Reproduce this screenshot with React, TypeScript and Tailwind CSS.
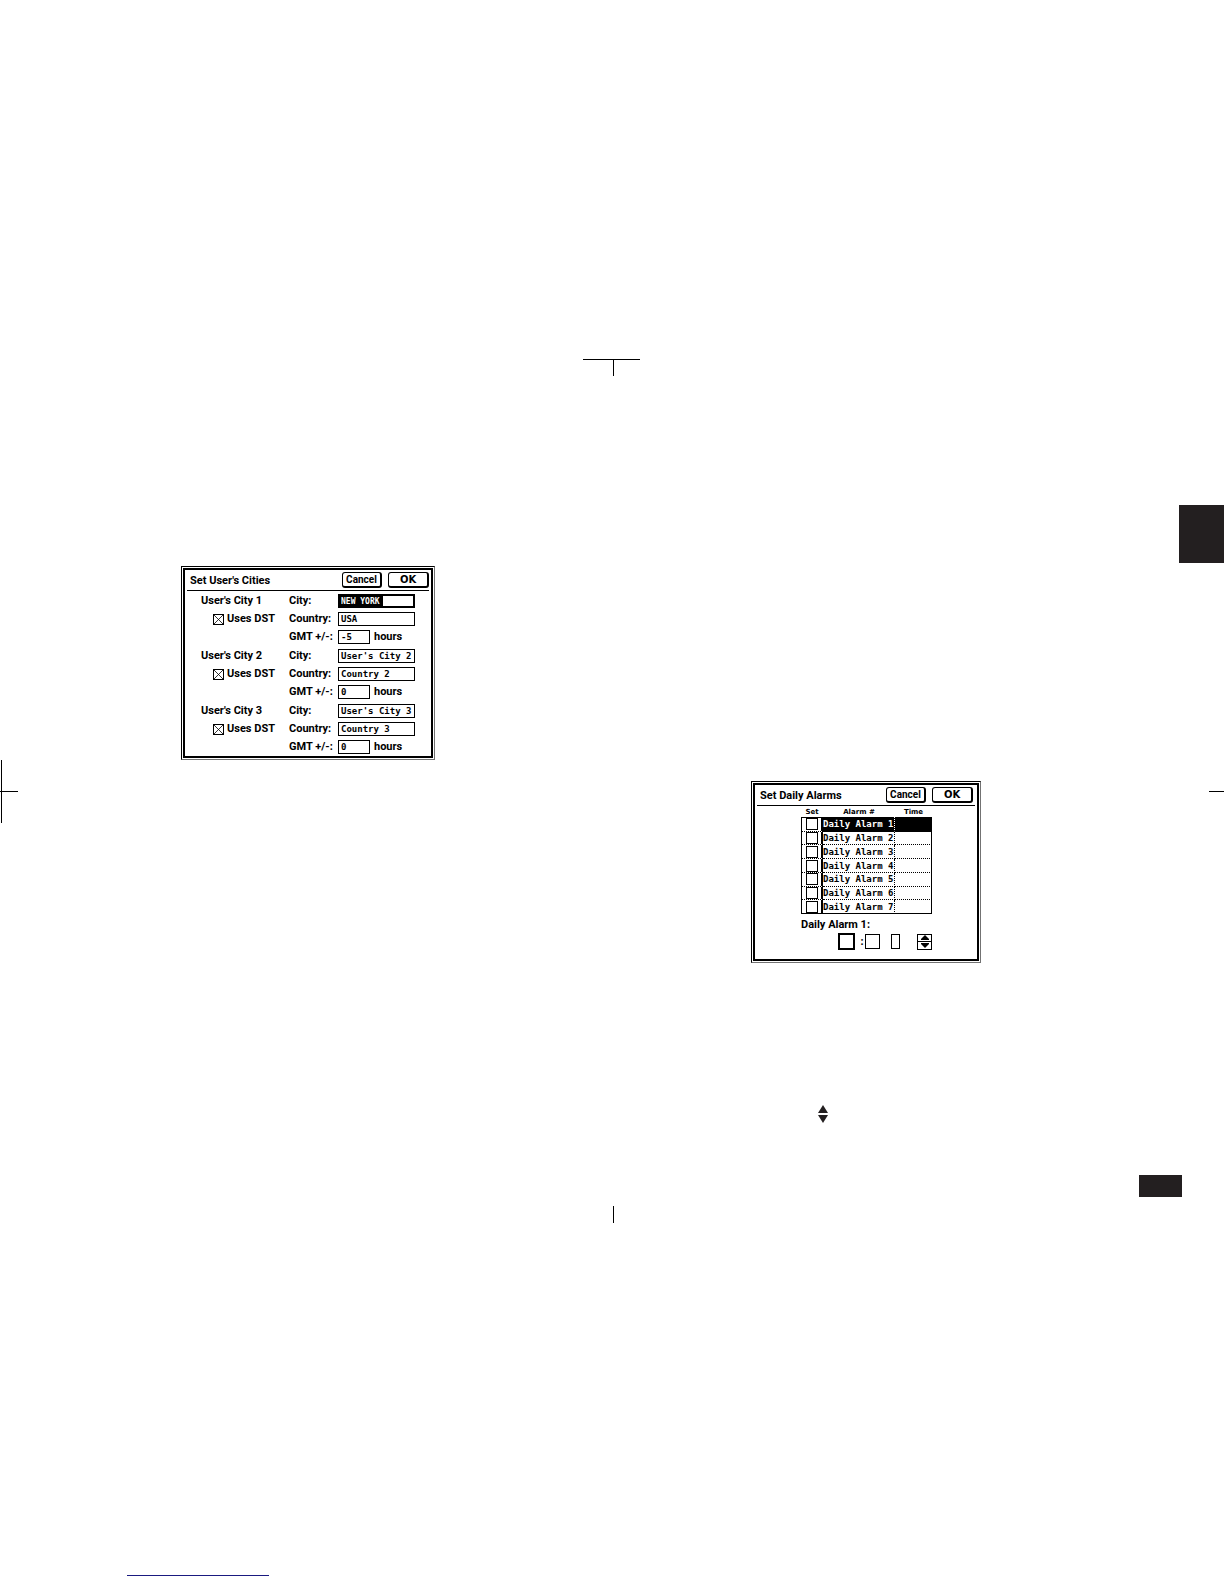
import React from "react";

const ui = "font-['Roboto',sans-serif] font-bold";
const mono = "font-['DejaVu_Sans_Mono',monospace] font-bold leading-3";

type DialogProps = { title: string; className: string; headerClassName?: string; children: React.ReactNode };

function Dialog({ title, className, headerClassName = "", children }: DialogProps) {
  return (
    <section
      aria-label={title}
      className={`border border-r-neutral-500 border-b-neutral-500 border-l-black border-t-black bg-white p-px ${className}`}
    >
      <div className="h-full border-2 border-black px-0.5">
        <header className={`flex items-start border-b border-black pl-[3px] pt-0.5 ${headerClassName}`}>
          <h2 className={`${ui} flex-1 text-[11px] leading-[18px]`}>{title}</h2>
          <button className="mr-1.5 h-4 w-10 rounded-[3px] border border-b-2 border-r-2 border-black text-center font-['Roboto',sans-serif] text-[10px] font-bold leading-3">
            Cancel
          </button>
          <button className="h-4 w-[41px] rounded-[3px] border border-b-2 border-r-2 border-black text-center font-['DejaVu_Sans',sans-serif] text-[10px] font-bold leading-3">
            OK
          </button>
        </header>
        {children}
      </div>
    </section>
  );
}

const cities = [
  { n: 1, city: "NEW YORK", country: "USA", gmt: "-5", active: true },
  { n: 2, city: "User's City 2", country: "Country 2", gmt: "0", active: false },
  { n: 3, city: "User's City 3", country: "Country 3", gmt: "0", active: false },
];

function CityGroup({ n, city, country, gmt, active }: (typeof cities)[number]) {
  return (
    <fieldset className={`${ui} mb-px grid grid-cols-[88px_49px_1fr] grid-rows-[18px_18px_18px] items-center pl-3.5 text-[11px] leading-4 last:mb-0`}>
      <span>User's City {n}</span>
      <label htmlFor={`city-${n}`}>City:</label>
      {active ? (
        <span className="flex h-3.5 w-[77px] border-2 border-l-0 border-black">
          <input id={`city-${n}`} defaultValue={city} className={`${mono} h-full w-[45px] bg-black pl-[3px] text-[8px] text-white outline-none`} />
        </span>
      ) : (
        <input id={`city-${n}`} defaultValue={city} className={`${mono} h-3.5 w-[77px] border border-black pl-0.5 text-[9px] outline-none`} />
      )}
      <label className="flex items-center gap-[3px] pl-3">
        <span className="relative flex size-[11px]">
          <input type="checkbox" defaultChecked className="peer size-[11px] appearance-none border border-black" />
          <svg viewBox="0 0 11 11" className="pointer-events-none absolute inset-0 hidden size-[11px] peer-checked:block" aria-hidden="true">
            <path d="M1 1L10 10M10 1L1 10" stroke="black" strokeWidth="0.8" />
          </svg>
        </span>
        Uses DST
      </label>
      <label htmlFor={`country-${n}`}>Country:</label>
      <input id={`country-${n}`} defaultValue={country} className={`${mono} h-3.5 w-[77px] border border-black pl-0.5 text-[9px] outline-none`} />
      <label htmlFor={`gmt-${n}`} className="col-start-2 whitespace-nowrap">GMT +/-:</label>
      <span className="flex items-center gap-1">
        <input id={`gmt-${n}`} defaultValue={gmt} className={`${mono} h-3.5 w-8 border border-black pl-0.5 text-[9px] outline-none`} />
        hours
      </span>
    </fieldset>
  );
}

function AlarmTable() {
  return (
    <table className="ml-[44px] mt-px h-[107px] w-[131px] table-fixed border-separate border-spacing-0">
      <colgroup>
        <col className="w-[22px]" />
        <col className="w-[72px]" />
        <col className="w-[37px]" />
      </colgroup>
      <thead>
        <tr className="font-['DejaVu_Sans',sans-serif] text-[7px] font-bold leading-[10px]">
          <th className="p-0">Set</th>
          <th className="p-0">Alarm #</th>
          <th className="p-0">Time</th>
        </tr>
      </thead>
      <tbody>
        {[1, 2, 3, 4, 5, 6, 7].map((n) => (
          <tr key={n} className={n === 1 ? "bg-black text-white" : ""}>
            <td className={`border-b border-l border-r-2 border-black bg-white p-0 ${n === 1 ? "border-t" : ""} ${n === 7 ? "" : "[border-bottom-style:dotted]"}`}>
              <input type="checkbox" aria-label={`Set Daily Alarm ${n}`} className="mx-auto block size-3 appearance-none border border-black" />
            </td>
            <td className={`${mono} whitespace-nowrap border-b border-r border-b-black p-0 text-[9px] [border-right-style:dotted] ${n === 1 ? "border-r-white" : "border-r-black"} ${n === 7 ? "" : "[border-bottom-style:dotted]"}`}>
              Daily Alarm {n}
            </td>
            <td className={`border-b border-r border-black p-0 ${n === 7 ? "" : "[border-bottom-style:dotted]"}`} />
          </tr>
        ))}
      </tbody>
    </table>
  );
}

function Triangles({ className }: { className: string }) {
  return (
    <svg viewBox="0 0 10 18" className={className} fill="#231f20" aria-hidden="true">
      <path d="M5 0L10 8H0ZM0 10H10L5 18Z" />
    </svg>
  );
}

export default function App() {
  return (
    <main className="flex w-full flex-col bg-white pb-2 pt-[359px] text-black">
      <div className="flex justify-center">
        <svg width="58" height="17" aria-hidden="true">
          <path d="M0 0H57V1H0ZM30 0H31V17H30Z" />
        </svg>
      </div>
      <div className="mt-[129px] flex justify-end">
        <div className="h-[58px] w-[45px] bg-[#231f20]" />
      </div>
      <div className="mt-[3px] pl-[181px]">
        <Dialog title="Set User's Cities" className="w-[254px]">
          <div className="pt-px">
            {cities.map((c) => (
              <CityGroup key={c.n} {...c} />
            ))}
          </div>
        </Dialog>
      </div>
      <div className="grid grid-cols-2">
        <svg width="19" height="63" aria-hidden="true">
          <path d="M1 0H2V63H1ZM0 31H18V32H0Z" />
        </svg>
        <div className="flex items-start justify-between pl-[139px]">
          <Dialog title="Set Daily Alarms" className="mt-[21px] w-[230px]" headerClassName="pr-0.5">
            <AlarmTable />
            <div className={`${ui} ml-[44px] mt-[3px] w-[131px] pb-[9px] text-[11px] leading-4`}>
              <p>Daily Alarm 1:</p>
              <div className="flex items-center pl-[37px]">
                <input aria-label="Hour" className="size-[17px] border-2 border-black" />
                <span className="w-2.5 pl-1 text-center">:</span>
                <input aria-label="Minute" className="size-[15px] border border-black" />
                <input aria-label="AM or PM" className="ml-[11px] h-[15px] w-[9px] border border-black" />
                <span className="ml-auto flex h-4 w-[15px] flex-col border border-black">
                  <button aria-label="Increase" className="flex h-[7px] items-center justify-center border-b border-black">
                    <svg width="10" height="5" aria-hidden="true"><path d="M5 0L9 4V5H1V4Z" /></svg>
                  </button>
                  <button aria-label="Decrease" className="flex h-[7px] items-center justify-center">
                    <svg width="10" height="5" aria-hidden="true"><path d="M5 5L9 1V0H1V1Z" /></svg>
                  </button>
                </span>
              </div>
            </div>
          </Dialog>
          <svg width="15" height="1" className="mt-[31px]" aria-hidden="true">
            <path d="M0 0H15V1H0Z" />
          </svg>
        </div>
      </div>
      <div className="mt-[142px] grid grid-cols-2">
        <Triangles className="col-start-2 ml-[206px] h-[18px] w-2.5" />
      </div>
      <div className="mt-[52px] flex justify-end pr-[42px]">
        <div className="h-[22px] w-[43px] bg-[#231f20]" />
      </div>
      <div className="mt-[9px] flex justify-center">
        <svg width="58" height="17" aria-hidden="true">
          <path d="M30 0H31V17H30Z" />
        </svg>
      </div>
      <footer className="mt-[352px] pl-[127px]">
        <div className="h-px w-[142px] bg-[#1a1a80]" />
      </footer>
    </main>
  );
}
